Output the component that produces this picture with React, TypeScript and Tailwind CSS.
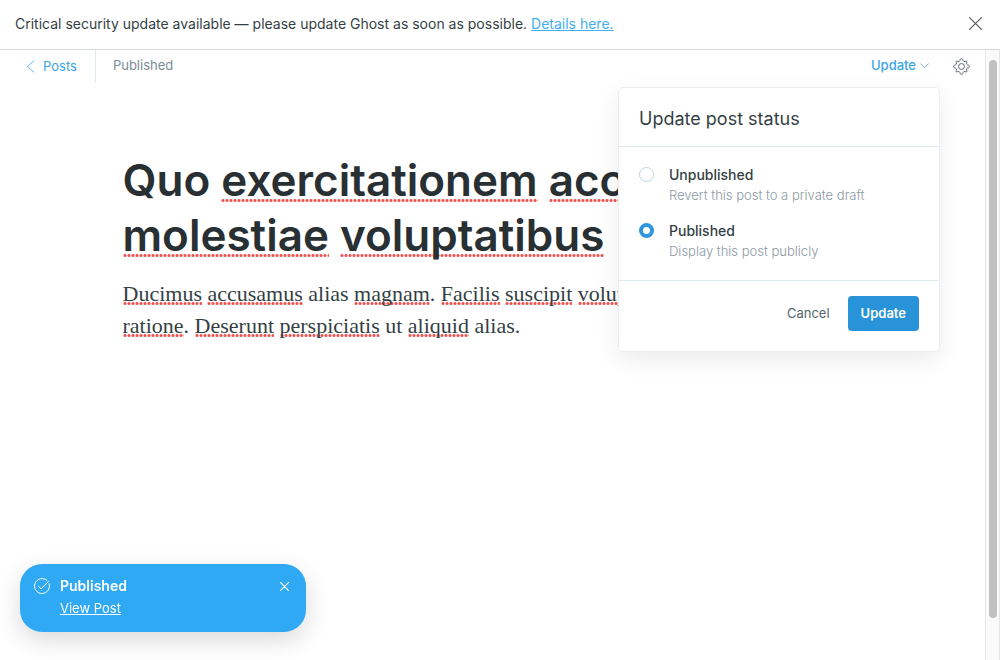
import { useState } from "react";
import type { ReactNode } from "react";

function Misspelt({ children, title = false }: { children: ReactNode; title?: boolean }) {
  return (
    <span
      className={
        "bg-[radial-gradient(circle,#f0514f_0,#f0514f_1px,transparent_2px)] bg-[length:4px_3px] bg-repeat-x " +
        (title ? "bg-[position:0_calc(100%_-_5px)]" : "bg-[position:0_calc(100%_-_1px)]")
      }
    >
      {children}
    </span>
  );
}

function Cross({ className }: { className: string }) {
  return (
    <svg viewBox="0 0 12 12" className={className} fill="none" stroke="currentColor" strokeLinecap="round" aria-hidden="true">
      <path d="M.5.5l11 11M11.5.5l-11 11" />
    </svg>
  );
}

function Gear() {
  return (
    <svg viewBox="0 0 24 24" className="size-[17px]" fill="none" stroke="#54666d" strokeWidth="1.4" strokeLinejoin="round" aria-hidden="true">
      <circle cx="12" cy="12" r="4.2" />
      <path d="M13.84 2.3 A1.9 1.9 0 0 0 10.16 2.3 L9.8 3.4 A2.3 2.3 0 0 1 6.6 4.7 L5.6 4.2 A1.5 1.5 0 0 0 4.2 5.6 L4.7 6.6 A2.3 2.3 0 0 1 3.4 9.8 L2.1 10.2 A1.9 1.9 0 0 0 2.1 13.8 L3.4 14.2 A2.3 2.3 0 0 1 4.7 17.4 L4.2 18.4 A1.5 1.5 0 0 0 5.6 19.8 L6.6 19.3 A2.3 2.3 0 0 1 9.8 20.6 L10.16 21.7 A1.9 1.9 0 0 0 13.84 21.7 L14.2 20.6 A2.3 2.3 0 0 1 17.4 19.3 L18.4 19.8 A1.5 1.5 0 0 0 19.8 18.4 L19.3 17.4 A2.3 2.3 0 0 1 20.6 14.2 L21.9 13.8 A1.9 1.9 0 0 0 21.9 10.2 L20.6 9.8 A2.3 2.3 0 0 1 19.3 6.6 L19.8 5.6 A1.5 1.5 0 0 0 18.4 4.2 L17.4 4.7 A2.3 2.3 0 0 1 14.2 3.4 Z" />
    </svg>
  );
}

const statuses = [
  { value: "draft", label: "Unpublished", hint: "Revert this post to a private draft" },
  { value: "published", label: "Published", hint: "Display this post publicly" },
];

function StatusMenu() {
  const [status, setStatus] = useState("published");
  return (
    <form className="absolute top-[37px] right-[45px] z-10 w-[322px] rounded-[5px] border border-[#ebeeef] bg-white shadow-[0_8px_24px_rgba(0,0,0,0.08)]">
      <h2 className="border-b border-[#dfe9f0] px-5 pt-[19px] pb-[15px] text-lg leading-6 text-[#343f44]">Update post status</h2>
      <div className="flex flex-col gap-4 px-5 pt-[18px] pb-[19px]">
        {statuses.map((s) => (
          <div key={s.value} className="flex gap-[15px]">
            <input
              type="radio"
              id={s.value}
              name="status"
              checked={status === s.value}
              onChange={() => setStatus(s.value)}
              className="mt-[2px] size-[15px] shrink-0 appearance-none rounded-full border border-[#bcd3e4] bg-white checked:border-4 checked:border-[#2f96dc]"
            />
            <label htmlFor={s.value} className="flex flex-col text-sm leading-5 font-medium text-[#343f44]">
              {s.label}
              <span className="text-[13px] leading-5 font-light text-[#8a9aa3]">{s.hint}</span>
            </label>
          </div>
        ))}
      </div>
      <div className="flex items-center justify-end gap-[18px] border-t border-[#dfe9f0] px-5 pt-[15px] pb-5 text-[13px]">
        <button type="button" className="text-[#54666d]">Cancel</button>
        <button type="button" className="h-[35px] rounded-[4px] bg-[#2893d8] px-[13px] font-semibold text-white">Update</button>
      </div>
    </form>
  );
}

export default function App() {
  return (
    <div className="flex h-screen flex-col overflow-hidden bg-white font-['Inter',sans-serif] text-[#343f44]">
      <aside className="flex h-[50px] shrink-0 items-center justify-between border-b border-[#d4d9dc] pr-[18px] pb-[2px] pl-[15px] text-sm">
        <p>
          Critical security update available — please update Ghost as soon as possible.{" "}
          <a href="#details" className="text-[#3eb0ef] underline">Details here.</a>
        </p>
        <button type="button" aria-label="Dismiss alert" className="text-[#4b555a]">
          <Cross className="size-[13px]" />
        </button>
      </aside>

      <div className="flex min-h-0 flex-1">
        <main className="relative min-w-0 flex-1">
          <header className="flex items-start justify-between text-[13px]">
            <div className="flex">
              <a href="#posts" className="flex h-[33px] items-center gap-2 border-r border-[#dfe9f0] pr-[18px] pl-[26px] text-[#3aa5e6]">
                <svg viewBox="0 0 9 13" className="h-[13px] w-[9px]" fill="none" stroke="currentColor" strokeLinecap="round" strokeWidth="0.8" aria-hidden="true">
                  <path d="M8 .8L1.2 6.5 8 12.2" />
                </svg>
                Posts
              </a>
              <span className="pl-[17px] leading-[30px] text-[#7c8b94]">Published</span>
            </div>
            <div className="flex h-8 items-center pr-[15px]">
              <button type="button" className="flex items-center gap-1 font-medium text-[#3aa5e6]">
                Update
                <svg viewBox="0 0 9 6" className="h-[6px] w-[9px]" fill="none" stroke="#4f9bc8" strokeLinecap="round" strokeWidth="0.8" aria-hidden="true">
                  <path d="M.6.8l3.9 4 3.9-4" />
                </svg>
              </button>
              <button type="button" aria-label="Settings" className="ml-6">
                <Gear />
              </button>
            </div>
          </header>

          <StatusMenu />

          <article className="mx-auto max-w-[740px] pt-[70px]">
            <h1 className="text-[44px] leading-[55px] font-semibold text-[#283034]">
              Quo <Misspelt title>exercitationem</Misspelt> <Misspelt title>accusantium</Misspelt>
              <br />
              <Misspelt title>molestiae</Misspelt> <Misspelt title>voluptatibus</Misspelt>
            </h1>
            <p className="mt-[15px] font-['Liberation_Serif',serif] text-[22px] leading-8">
              <Misspelt>Ducimus</Misspelt> <Misspelt>accusamus</Misspelt> alias <Misspelt>magnam</Misspelt>.{" "}
              <Misspelt>Facilis</Misspelt> <Misspelt>suscipit</Misspelt> <Misspelt>voluptatem</Misspelt>
              <br />
              <Misspelt>ratione</Misspelt>. <Misspelt>Deserunt</Misspelt> <Misspelt>perspiciatis</Misspelt> ut{" "}
              <Misspelt>aliquid</Misspelt> alias.
            </p>
          </article>
        </main>

        <div aria-hidden="true" className="flex w-[15px] shrink-0 justify-center border-x border-[#e6e6e6] bg-[#fafafa] pt-[10px] pb-[42px]">
          <div className="w-2 rounded-full bg-[#c1c1c1]" />
        </div>
      </div>

      <section
        role="status"
        className="fixed bottom-7 left-5 flex w-[286px] items-start rounded-[22px] bg-[#30a9f5] px-[14px] pt-3 pb-[14px] text-white shadow-[0_8px_24px_rgba(0,0,0,0.15)]"
      >
        <svg viewBox="0 0 16 16" className="mt-[2px] size-4" fill="none" stroke="currentColor" strokeLinecap="round" strokeLinejoin="round" strokeWidth="1" aria-hidden="true">
          <path d="M15.2 5.8A7.5 7.5 0 1 1 13 2.4" />
          <path d="M4.4 8.2l2.7 2.7 7.3-7.4" />
        </svg>
        <div className="ml-[10px] flex flex-1 flex-col items-start">
          <strong className="text-sm leading-5 font-semibold">Published</strong>
          <a href="#post" className="mt-[2px] text-[13px] leading-5 underline">View Post</a>
        </div>
        <button type="button" aria-label="Close notification" className="mt-[6px] mr-[3px]">
          <Cross className="size-[9px] stroke-[1.5]" />
        </button>
      </section>
    </div>
  );
}
